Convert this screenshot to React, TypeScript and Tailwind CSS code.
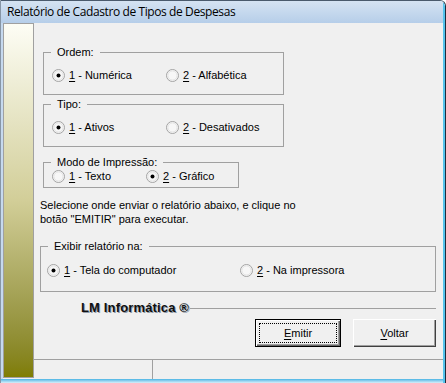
import React from "react";

type Opt = { key: string; rest: string; on?: boolean };

const Radio = ({ on }: { on?: boolean }) => (
  <svg width="13" height="13" viewBox="0 0 13 13" className="shrink-0">
    <circle cx="6.5" cy="6.5" r="6" fill="#f7f7f7" stroke="#a3a3a3" />
    <circle cx="6.5" cy="6.5" r="4.6" fill="none" stroke="#e2e2e2" />
    {on && <circle cx="6.5" cy="6.5" r="2" fill="#000" />}
  </svg>
);

const Option = ({ opt, width }: { opt: Opt; width?: string }) => (
  <div className={"flex items-center h-[13px] " + (width ?? "")}>
    <Radio on={opt.on} />
    <span className="ml-[4px] whitespace-nowrap leading-[13px]">
      <span className="underline underline-offset-[2px]">{opt.key}</span> - {opt.rest}
    </span>
  </div>
);

const Group = ({
  label,
  className,
  children,
}: {
  label: string;
  className: string;
  children: React.ReactNode;
}) => (
  <fieldset className={"border border-[#a0a0a0] " + className}>
    <legend className="ml-[7px] px-[6px] leading-[13px]">{label}</legend>
    {children}
  </fieldset>
);

export default function App() {
  return (
    <div className="w-[446px] h-[383px] border-t border-l border-r border-t-[#4a5a6c] border-l-[#8796a6] border-r-[#1e2c3c] rounded-tr-[6px] overflow-hidden font-['Liberation_Sans',Arial,sans-serif] text-[11px] text-black">
      <div className="h-full flex flex-col border-r-2 border-[#55c3ec] rounded-tr-[5px]">
        {/* title bar */}
        <div className="h-[22px] shrink-0 flex items-center pl-[6px] bg-gradient-to-b from-[#d5e3f2] to-[#b6cee9] font-['Open_Sans',sans-serif] text-[12px] tracking-[-0.4px]">
          Relatório de Cadastro de Tipos de Despesas
        </div>

        <div className="flex flex-1 bg-[#f0f0f0]">
          <div className="w-[2px] bg-[#c6d9ee]" />
          <div className="w-[31px] h-[355px] border border-[#a0a0a0] bg-gradient-to-b from-[#fdfdf5] via-[#d2ce98] to-[#7f7d00]" />

          <div className="flex-1 flex flex-col">
            <div className="flex-1 flex flex-col pl-[6px] pr-[7px]">
              <Group label="Ordem:" className="mt-[23px] ml-[3px] w-[241px] h-[49px]">
                <div className="flex mt-[10px] pl-[8px]">
                  <Option width="w-[114px]" opt={{ key: "1", rest: "Numérica", on: true }} />
                  <Option opt={{ key: "2", rest: "Alfabética" }} />
                </div>
              </Group>

              <Group label="Tipo:" className="mt-[3px] ml-[3px] w-[241px] h-[49px]">
                <div className="flex mt-[10px] pl-[8px]">
                  <Option width="w-[114px]" opt={{ key: "1", rest: "Ativos", on: true }} />
                  <Option opt={{ key: "2", rest: "Desativados" }} />
                </div>
              </Group>

              <Group label="Modo de Impressão:" className="mt-[9px] ml-[3px] w-[196px] h-[32px]">
                <div className="flex mt-[1px] pl-[8px]">
                  <Option width="w-[94px]" opt={{ key: "1", rest: "Texto" }} />
                  <Option opt={{ key: "2", rest: "Gráfico", on: true }} />
                </div>
              </Group>

              <p className="mt-[10px] leading-[14px]">
                Selecione onde enviar o relatório abaixo, e clique no
                <br />
                botão "EMITIR" para executar.
              </p>

              <Group label="Exibir relatório na:" className="mt-[14px] h-[52px]">
                <div className="flex mt-[11px] pl-[6px]">
                  <Option width="w-[193px]" opt={{ key: "1", rest: "Tela do computador", on: true }} />
                  <Option opt={{ key: "2", rest: "Na impressora" }} />
                </div>
              </Group>

              <div className="flex items-center mt-[8px] h-[16px]">
                <span className="ml-[41px] font-bold text-[13px] tracking-[0.15px] text-[#101010] [text-shadow:1px_1px_0_#8e9aa8]">
                  LM Informática ®
                </span>
                <div className="flex-1 ml-[1px] mt-[1px] h-px bg-[#a0a0a0]" />
              </div>

              <div className="flex justify-end gap-[12px] mt-[3px]">
                <button className="w-[86px] h-[28px] border border-black bg-[#f0f0f0] shadow-[inset_1px_1px_0_#fff,inset_-1px_-1px_0_#696969,inset_-2px_-2px_0_#a0a0a0] outline-1 outline-dotted outline-black outline-offset-[-5px]">
                  <span className="underline underline-offset-[2px]">E</span>mitir
                </button>
                <button className="w-[83px] h-[28px] bg-[#f0f0f0] shadow-[inset_1px_1px_0_#fff,inset_-1px_-1px_0_#404040,inset_-2px_-2px_0_#a0a0a0]">
                  <span className="underline underline-offset-[2px]">V</span>oltar
                </button>
              </div>
            </div>

            {/* status bar */}
            <div className="h-[20px] shrink-0 flex border-t border-[#a0a0a0]">
              <div className="w-[119px] border-r border-[#a0a0a0]" />
            </div>
          </div>
        </div>

        <div className="h-[4px] shrink-0 bg-gradient-to-b from-[#46b4e4] to-[#d6eff9]" />
      </div>
    </div>
  );
}
